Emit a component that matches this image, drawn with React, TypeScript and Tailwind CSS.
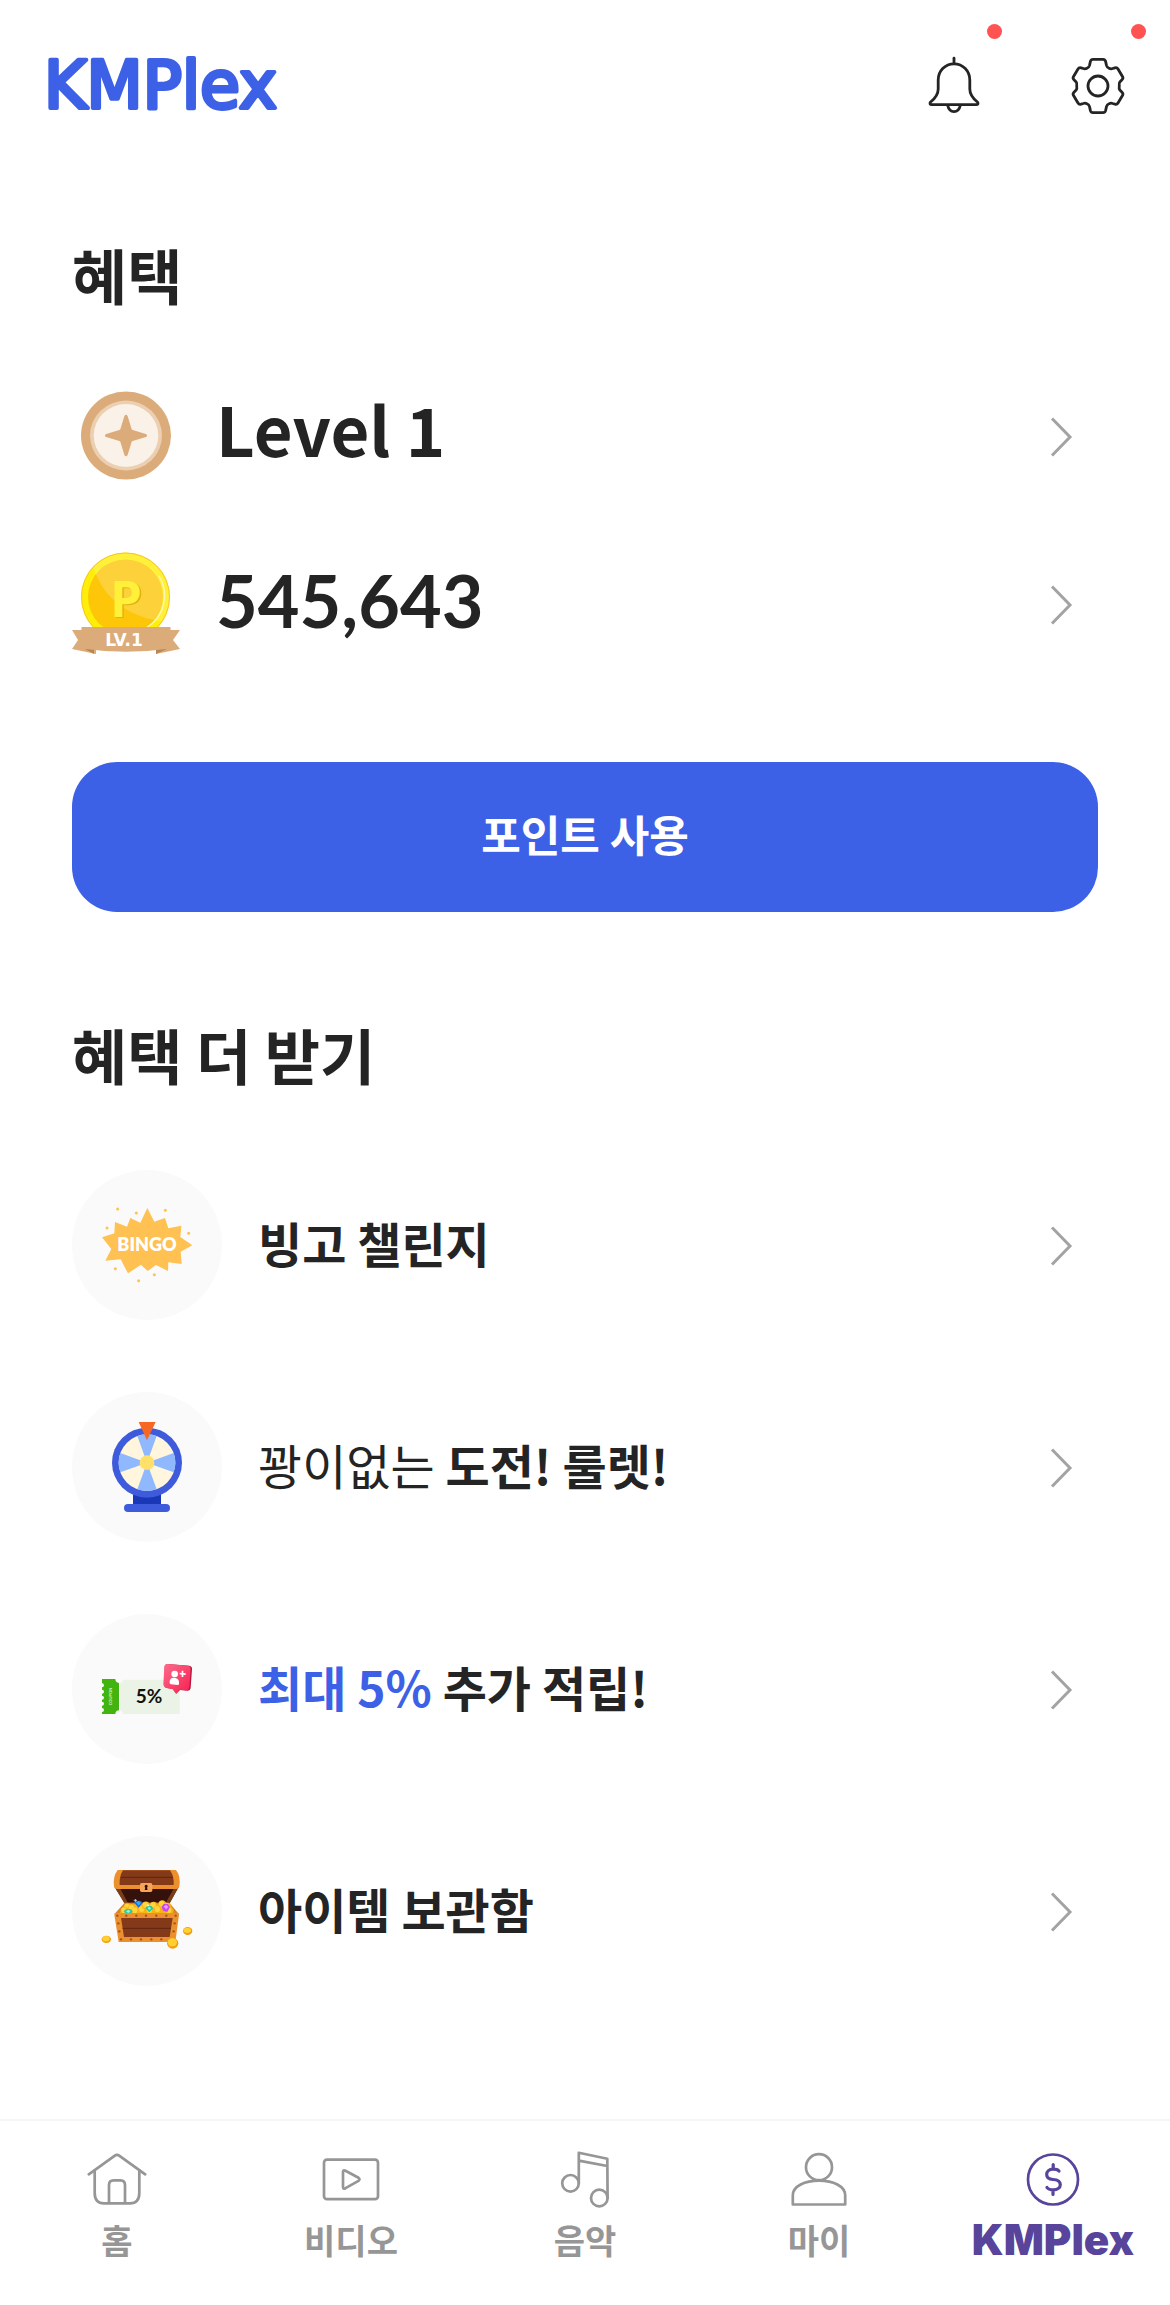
import type { ReactNode } from "react";

const INK = "#242424";

function Logo() {
  return (
    <svg width="256" height="80" viewBox="0 0 256 80" role="img" aria-label="KMPlex">
      <text
        x="0"
        y="62"
        fontSize="65"
        fontFamily="'DejaVu Sans', sans-serif"
        fill="#3d61e6"
        stroke="#3d61e6"
        strokeWidth="4"
        strokeLinejoin="round"
      >
        KMPlex
      </text>
    </svg>
  );
}

function BellIcon() {
  return (
    <svg width="60" height="62" viewBox="0 0 60 62" fill="none" stroke={INK} strokeWidth="2.8" strokeLinecap="round" strokeLinejoin="round">
      <path d="M30 3.2V8.5" />
      <path d="M30 8.8C21 8.8 14.2 16 14.2 25V34C14.2 39 11 43.5 6.6 47C5.4 48.4 6 49.7 7.8 49.7H52.2C54 49.7 54.6 48.4 53.4 47C49 43.5 45.8 39 45.8 34V25C45.8 16 39 8.8 30 8.8Z" />
      <path d="M23.7 50.5C24.6 54.5 27 56.6 30 56.6S35.4 54.5 36.3 50.5" />
    </svg>
  );
}

function GearIcon() {
  return (
    <svg width="60" height="60" viewBox="0 0 60 60" fill="none" stroke={INK} strokeWidth="2.8" strokeLinejoin="round">
      <path d="M25 3.4H35Q37 3.4 37.6 5.400L38.5 9.500Q39 11.4 41 12.2Q43 13.2 44.6 12.500L47 11.8Q49 11.3 50 13L54.600 20.800Q55.500 22.300 54 23.800L51.800 26Q50.800 27.4 51.3 30Q50.800 32.6 51.800 34L54 36.2Q55.500 37.7 54.600 39.2L50 47Q49 48.7 47 48.2L44.600 47.500Q43 46.800 41 47.800Q39 48.600 38.500 50.500L37.600 54.600Q37 56.600 35 56.600H25Q23 56.600 22.400 54.600L21.500 50.500Q21 48.600 19 47.800Q17 46.800 15.400 47.500L13 48.200Q11 48.700 10 47L5.400 39.200Q4.500 37.700 6 36.200L8.200 34Q9.200 32.600 8.700 30Q9.200 27.400 8.200 26L6 23.800Q4.500 22.300 5.400 20.800L10 13Q11 11.300 13 11.800L15.400 12.500Q17 13.200 19 12.200Q21 11.400 21.500 9.500L22.400 5.400Q23 3.400 25 3.400Z" />
      <circle cx="30" cy="30" r="10" />
    </svg>
  );
}

function Chevron() {
  return (
    <svg className="shrink-0" width="24" height="44" viewBox="0 0 24 44" fill="none" stroke="#a3a3a3" strokeWidth="3" aria-hidden="true">
      <path d="M3 4.500L21 23L3 41.500" />
    </svg>
  );
}

function LevelBadge() {
  return (
    <svg width="90" height="90" viewBox="0 0 90 90" aria-hidden="true">
      <ellipse cx="45" cy="44.500" rx="45" ry="44" fill="#dbac7a" />
      <ellipse cx="45" cy="44.500" rx="36" ry="35" fill="#eccfb0" />
      <ellipse cx="45" cy="44.500" rx="32.300" ry="31.500" fill="#faf1e8" />
      <path
        d="M43.4 25Q45 22.500 46.600 25L50.600 38.100Q50.900 38.900 51.700 39.100L64.800 42.900Q67.400 44.500 64.800 46.100L51.700 49.900Q50.900 50.100 50.600 50.900L46.600 64Q45 66.500 43.400 64L39.400 50.900Q39.100 50.100 38.300 49.900L25.200 46.100Q22.600 44.500 25.200 42.900L38.300 39.100Q39.100 38.900 39.400 38.100Z"
        fill="#dbac7a"
      />
    </svg>
  );
}

function PointMedal() {
  return (
    <svg width="108" height="104" viewBox="0 0 108 104" aria-hidden="true">
      <defs>
        <clipPath id="coin-face">
          <circle cx="53.5" cy="45" r="44.5" />
        </clipPath>
      </defs>
      <circle cx="53.5" cy="45" r="44.5" fill="#ffee08" />
      <circle cx="53.5" cy="45" r="37.5" fill="#fdc608" />
      <path clipPath="url(#coin-face)" d="M18 0C23 38 50 68 100 70V0Z" fill="#fff" fillOpacity="0.2" />
      <circle cx="53.5" cy="45" r="44" fill="none" stroke="#f6c52c" strokeWidth="1" />
      <path d="M87 24A37.5 37.5 0 0 1 74 76" fill="none" stroke="#fff9b0" strokeWidth="1.4" />
      <text x="39.5" y="66" fontSize="51" fontWeight="700" fontFamily="'Open Sans', sans-serif" fill="#e2b010">P</text>
      <text x="38" y="65" fontSize="51" fontWeight="700" fontFamily="'Open Sans', sans-serif" fill="#fff03a">P</text>
      <path d="M0 78H24V102L0 97L6 88Z" fill="#dbac7a" />
      <path d="M108 78H84V102L108 97L101 88Z" fill="#dbac7a" />
      <path d="M12 96.5L22 102V97ZM96 96.5L84 102V97Z" fill="#b98653" />
      <path d="M9.5 75H98.5V96.500Q54 103 9.500 96.500Z" fill="#dbac7a" />
      <text x="52" y="94" textAnchor="middle" fontSize="17" fontWeight="700" fontFamily="'DejaVu Sans', sans-serif" fill="#fff" aria-hidden="true">LV.1</text>
    </svg>
  );
}

function BingoArt() {
  const dots = [[173, 597], [229, 609], [316, 601], [141, 654], [386, 670], [166, 776], [283, 794], [236, 812]];
  return (
    <svg width="150" height="150" viewBox="36 480 450 450" aria-hidden="true">
      <g fill="#ffc151">
        <path d="M262 594L283 635L315 624L325 655L364 647L361 681L397 706L362 725L365 762L325 757L324 783L288 765L263 783L243 764L204 790L182 748L136 752L154 717L126 682L163 670L165 636L201 650L211 624L241 638Z" />
        {dots.map(([x, y]) => (
          <circle key={x} cx={x} cy={y} r="4.500" />
        ))}
      </g>
      <text x="261" y="724" textAnchor="middle" fontSize="54" fontWeight="800" fontFamily="Lato, sans-serif" fill="#fff">BINGO</text>
    </svg>
  );
}

function WheelArt() {
  return (
    <svg width="150" height="150" viewBox="36 36 450 450" aria-hidden="true">
      <path d="M219 330H303V376H219Z" fill="#1a37b8" />
      <rect x="192" y="372" width="138" height="24" rx="12" fill="#3e5bdb" />
      <circle cx="261" cy="248" r="105" fill="#3e5bdb" />
      <circle cx="261" cy="248" r="85" fill="#fff6dd" />
      <path d="M261 248L232 168A85 85 0 0 1 290 168ZM261 248L341 219A85 85 0 0 1 341 277ZM261 248L290 328A85 85 0 0 1 232 328ZM261 248L181 277A85 85 0 0 1 181 219Z" fill="#8fb8ff" />
      <circle cx="261" cy="248" r="22" fill="#ffe06b" />
      <path d="M236 126H287L261 181Z" fill="#f86624" />
    </svg>
  );
}

function CouponArt() {
  return (
    <svg width="150" height="150" viewBox="36 42 450 450" aria-hidden="true">
      <defs>
        <linearGradient id="bubble" x1="0" y1="0" x2="1" y2="1">
          <stop offset="0" stopColor="#ff6a8c" />
          <stop offset="1" stopColor="#f5204f" />
        </linearGradient>
      </defs>
      <path d="M126 237H166Q166 247 177 249V331Q167 331 166 342H126V336A6 6 0 0 0 126 324V317A6 6 0 0 0 126 305V299A6 6 0 0 0 126 287V281A6 6 0 0 0 126 269V262A6 6 0 0 0 126 250Z" fill="#42b40f" />
      <path d="M189 239H359V342H189Q188 333 180 331V249Q188 248 189 239Z" fill="#eaf3e5" />
      <text transform="translate(156 316) rotate(-90)" fontSize="12" fontWeight="700" fontFamily="Lato, sans-serif" fill="#d9f5cc">COUPON</text>
      <text x="267" y="310" textAnchor="middle" fontSize="57" fontWeight="700" fontFamily="Lato, sans-serif" fill="#111">5%</text>
      <path d="M324 192L388 197Q397 199 396 208L392 263Q391 272 382 272L360 270L349 281L338 267L320 264Q312 262 312 254L314 201Q315 192 324 192Z" fill="#b3173f" />
      <path d="M322 192L384 197Q393 199 392 208L388 262Q387 271 378 271L358 269L348 281L338 267L318 263Q310 261 310 253L313 200Q314 192 322 192Z" fill="url(#bubble)" />
      <g fill="#fff">
        <circle cx="344" cy="222" r="10" />
        <path d="M329 249V243Q331 232 343 233Q356 234 357 246V252Q357 255 353 255L333 253Q329 252 329 249Z" />
        <path d="M365 212H370V219L377 220V225L370 224V231H365V224L359 223V218L365 219Z" />
      </g>
    </svg>
  );
}

function ChestArt() {
  const gold = [[203, 247], [216, 250], [194, 258], [226, 258], [247, 254], [258, 242], [281, 243], [294, 254], [307, 238], [322, 246], [270, 258], [328, 258]];
  const studs = [[172, 272], [199, 272], [229, 272], [258, 272], [289, 272], [319, 272], [347, 272], [175, 295], [178, 319], [344, 295], [341, 319], [183, 343], [213, 343], [243, 343], [274, 343], [304, 343]];
  return (
    <svg width="150" height="150" viewBox="36 33 450 450" aria-hidden="true">
      <path d="M166 190H354L328 236H196Z" fill="#5a2611" />
      <path d="M180 190H342L326 232H198Z" fill="#35110b" />
      <path d="M166 190L196 240L204 234L180 190ZM354 190L326 240L318 232L342 190Z" fill="#7a3d1a" />
      <path d="M173 135H348Q363 155 358 184Q357 192 349 192H171Q163 192 162 184Q158 155 173 135Z" fill="#ec902e" />
      <path d="M189 136H330Q343 155 341 180H179Q177 155 189 136Z" fill="#843a19" />
      <path d="M183 157H338" stroke="#5e260f" strokeWidth="3" />
      <path d="M164 266L194 233H328L356 266Z" fill="#d9822a" />
      <path d="M178 266L200 238H322L342 266Z" fill="#f5b41c" />
      {gold.map(([x, y]) => (
        <g key={`${x}-${y}`}>
          <circle cx={x} cy={y} r="12.500" fill="#f6b313" />
          <ellipse cx={x - 2} cy={y - 2} rx="8" ry="9" fill="#ffd43f" />
        </g>
      ))}
      <path d="M222 232L229 227H241L248 233L236 248Z" fill="#1d63d8" />
      <path d="M228 232L236 228L243 233L236 242Z" fill="#36a9f4" />
      <path d="M256 249L262 243H274L280 250L268 262Z" fill="#1fc79a" />
      <path d="M262 249L268 245L274 250L268 256Z" fill="#8df3cf" />
      <path d="M191 259L198 252H211L219 259L213 266H197Z" fill="#2bcf9f" />
      <path d="M198 259L205 254L211 259L205 264Z" fill="#9df5d8" />
      <path d="M305 245L311 237H324L330 246L322 261L309 257Z" fill="#c946f5" />
      <path d="M311 244L319 240L325 246L318 253Z" fill="#ef9bff" />
      <path d="M226 222V231M221 226H231M264 237V245M260 241H268" stroke="#fff" strokeWidth="2" />
      <path d="M166 264H354Q358 264 357 269L346 351H176L163 269Q162 264 166 264Z" fill="#ec902e" />
      <path d="M183 279H338L329 336H192Z" fill="#843a19" />
      <path d="M188 310H333" stroke="#5e260f" strokeWidth="3" />
      {studs.map(([x, y]) => (
        <circle key={`${x}-${y}`} cx={x} cy={y} r="3.500" fill="#9c5420" />
      ))}
      <rect x="240" y="174" width="37" height="27" rx="5" fill="#f6a45a" />
      <path d="M258 179A5 5 0 0 1 261 188L263 195H254L256 188A5 5 0 0 1 258 179Z" fill="#2b0d08" />
      <g fill="#f39c12">
        <ellipse cx="139" cy="343" rx="14" ry="11" />
        <ellipse cx="383" cy="318" rx="14" ry="12" />
        <ellipse cx="338" cy="355" rx="17" ry="16" />
      </g>
      <g fill="#ffd030">
        <ellipse cx="138" cy="341" rx="11" ry="8" />
        <ellipse cx="382" cy="316" rx="11" ry="8" />
        <ellipse cx="337" cy="352" rx="14" ry="12" />
      </g>
    </svg>
  );
}

function TabIcon({ children }: { children: ReactNode }) {
  return (
    <svg width="60" height="60" viewBox="0 0 60 60" fill="none" stroke="currentColor" strokeWidth="2.7" strokeLinecap="round" strokeLinejoin="round" aria-hidden="true">
      {children}
    </svg>
  );
}

const tabs = [
  {
    label: "홈",
    icon: (
      <TabIcon>
        <path d="M1.800 24.300L27.500 5.800Q30 4 32.500 5.800L58.200 24.300" />
        <path d="M7.700 20.500V43Q7.700 53.300 17 53.300H43Q52.300 53.300 52.300 43V20.500" />
        <path d="M22 53V35Q22 30.300 26.500 30.300H33.500Q38 30.300 38 35V53" />
      </TabIcon>
    ),
  },
  {
    label: "비디오",
    icon: (
      <TabIcon>
        <rect x="3" y="9.700" width="54" height="39.500" rx="3" />
        <path d="M22 22Q22 19.500 24.500 20.800L37.500 27.800Q39.500 29.300 37.500 30.800L24.500 38.200Q22 39.500 22 37Z" />
      </TabIcon>
    ),
  },
  {
    label: "음악",
    icon: (
      <TabIcon>
        <circle cx="15.500" cy="33.300" r="8.300" />
        <circle cx="44.300" cy="48" r="8.300" />
        <path d="M23.800 33V2.800L52.300 8.800L52.600 48M23.800 10.700L52.300 16" />
      </TabIcon>
    ),
  },
  {
    label: "마이",
    icon: (
      <TabIcon>
        <circle cx="30" cy="17.200" r="13" />
        <path d="M3.800 54.500V45.500C3.800 36 16 30.700 30 30.700S56.200 36 56.200 45.500V54.500Z" />
      </TabIcon>
    ),
  },
  {
    label: "KMPlex",
    active: true,
    icon: (
      <TabIcon>
        <circle cx="30" cy="29.500" r="25" />
        <path strokeWidth="3.200" d="M30.200 14.500V19M30 40V44.500M36 21C34.500 19.400 32.500 19.200 30 19.200C26.200 19.200 23.700 21.500 23.700 24.500C23.700 27.800 26.200 29.300 30 29.500C34.500 29.700 37.300 31.500 37.300 34.800C37.300 38 34 39.800 30.500 39.800C27.500 39.800 25 39.200 24 37.500" />
      </TabIcon>
    ),
  },
];

const benefits = [
  { art: <BingoArt />, text: <>빙고 챌린지</> },
  {
    art: <WheelArt />,
    text: (
      <>
        <span className="font-normal">꽝이없는</span> 도전! 룰렛!
      </>
    ),
  },
  {
    art: <CouponArt />,
    text: (
      <>
        <span className="text-[#3d61e6]">최대 5%</span> 추가 적립!
      </>
    ),
  },
  { art: <ChestArt />, text: <>아이템 보관함</> },
];

function HeaderButton({ label, children }: { label: string; children: ReactNode }) {
  return (
    <button type="button" aria-label={label} className="relative flex w-36 items-center justify-center">
      {children}
      <span className="absolute top-6 right-6 size-[15px] rounded-full bg-[#ff5353]" />
    </button>
  );
}

export default function App() {
  return (
    <div className="flex min-h-screen flex-col bg-white font-['Noto_Sans_CJK_KR',sans-serif] text-[#242424]">
      <header className="flex h-[171px] justify-between pl-11">
        <a href="#home" className="flex items-center">
          <Logo />
        </a>
        <div className="flex">
          <HeaderButton label="알림">
            <BellIcon />
          </HeaderButton>
          <HeaderButton label="설정">
            <GearIcon />
          </HeaderButton>
        </div>
      </header>

      <main className="flex-1 px-[72px] pt-[67px] pb-16">
        <section>
          <h1 className="text-[60px] leading-[72px] font-bold">혜택</h1>
          <ul className="mt-[72px] flex flex-col gap-[60px]">
            <li>
              <a href="#level" className="flex h-[108px] items-center pr-[25px]">
                <span className="flex w-[108px] justify-center">
                  <LevelBadge />
                </span>
                <span className="ml-9 flex-1 pb-4 text-[67px] leading-[72px] font-bold">Level 1</span>
                <Chevron />
              </a>
            </li>
            <li>
              <a href="#points" className="flex h-[108px] items-center pr-[25px]">
                <PointMedal />
                <span className="ml-9 flex-1 pb-2 font-[Lato,sans-serif] text-[72px] leading-[72px] font-bold">545,643</span>
                <Chevron />
              </a>
            </li>
          </ul>
          <button type="button" className="mt-[104px] h-[150px] w-full rounded-[45px] bg-[#3d61e6] pb-2 text-[43px] font-bold text-white">
            포인트 사용
          </button>
        </section>

        <section className="mt-[106px]">
          <h2 className="text-[60px] leading-[72px] font-bold">혜택 더 받기</h2>
          <ul className="mt-20 flex flex-col gap-[72px]">
            {benefits.map((item, i) => (
              <li key={i}>
                <a href="#benefit" className="flex items-center pr-[25px]">
                  <span className="size-[150px] shrink-0 rounded-full bg-[#fafafa]">{item.art}</span>
                  <span className="ml-9 flex-1 pb-1.5 text-[48px] leading-[72px] font-bold">{item.text}</span>
                  <Chevron />
                </a>
              </li>
            ))}
          </ul>
        </section>
      </main>

      <nav className="grid h-[186px] grid-cols-5 border-t-2 border-[#f5f5f5]">
        {tabs.map((tab) => (
          <a
            key={tab.label}
            href="#tab"
            aria-current={tab.active ? "page" : undefined}
            className={
              tab.active
                ? "flex flex-col items-center gap-1.5 pt-[29px] font-[Inter,sans-serif] text-[42px] leading-[48px] font-black text-[#58449b]"
                : "flex flex-col items-center gap-1.5 pt-[29px] text-[34px] leading-[48px] font-bold text-[#969696]"
            }
          >
            {tab.icon}
            <span>{tab.label}</span>
          </a>
        ))}
      </nav>
    </div>
  );
}
